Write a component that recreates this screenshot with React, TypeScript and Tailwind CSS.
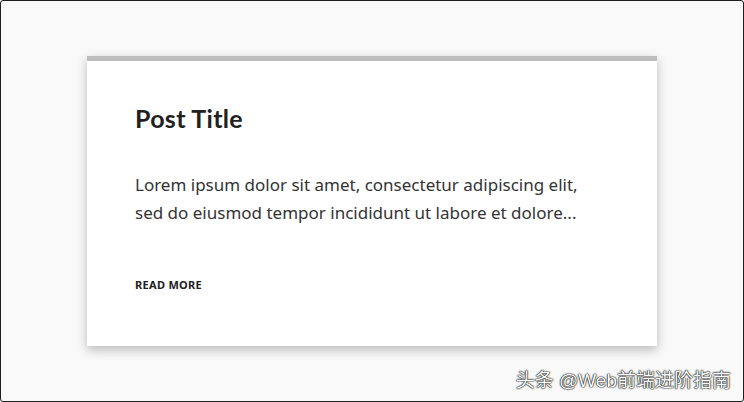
export default function App() {
  return (
    <div className="relative w-[744px] h-[402px] overflow-hidden rounded-[3px] border border-[#1f1f1f] bg-[#f9f9f9]">
      <div className="flex h-full items-start justify-center pt-[55px]">
        {/* Card */}
        <div className="w-[570px] h-[290px] border-t-[5px] border-[#bdbdbd] bg-white shadow-[0_4px_10px_rgba(0,0,0,0.25)]">
          <div className="px-[48px] pt-[42px]">
            <h2
              className="text-[25px] leading-[30px] font-bold tracking-[0.3px] text-[#212121]"
              style={{ fontFamily: 'Lato, "Open Sans", sans-serif' }}
            >
              Post Title
            </h2>
            <p
              className="mt-[38px] text-[17px] leading-[28px] text-[#333]"
              style={{ fontFamily: '"Noto Sans", "Open Sans", sans-serif' }}
            >
              Lorem ipsum dolor sit amet, consectetur adipiscing elit,
              <br />
              sed do eiusmod tempor incididunt ut labore et dolore...
            </p>
            <a
              href="#"
              className="mt-[50px] block text-[11px] leading-[16px] font-bold tracking-[0.3px] text-[#212121]"
              style={{ fontFamily: '"Noto Sans", "Open Sans", sans-serif' }}
            >
              READ MORE
            </a>
          </div>
        </div>
      </div>

      {/* Watermark */}
      <div
        className="absolute right-[12px] bottom-[9px] text-[19px] leading-[22px] text-white [text-shadow:0_0_1px_#000,0_0_1px_#000,0_0_2px_#333]"
        style={{ fontFamily: '"Liberation Sans", "Noto Sans CJK SC", sans-serif' }}
      >
        头条 @Web前端进阶指南
      </div>
    </div>
  );
}
